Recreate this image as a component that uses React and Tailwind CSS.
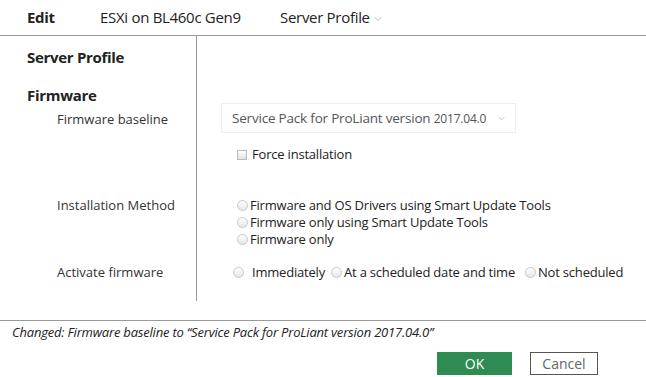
import { ChevronDown } from "lucide-react"

const font = { fontFamily: '"Open Sans", "Noto Sans", sans-serif' }

const Radio = ({ className = "" }) => (
  <span className={"inline-block w-[11px] h-[11px] rounded-full border border-[#c8c8c8] bg-gradient-to-b from-white to-[#e6e6e6] shrink-0 " + className} />
)

const Label = ({ children }) => (
  <div className="pl-[57px] text-[13px] text-[#333]">{children}</div>
)

export default function App() {
  return (
    <div className="w-[646px] h-[377px] bg-white text-[#222] overflow-hidden" style={font}>
      {/* header */}
      <div className="h-[36px] flex items-center border-b border-[#9a9a9a] text-[15px] tracking-[-0.3px]">
        <span className="pl-[27px] w-[100px] font-bold">Edit</span>
        <span className="w-[180px]">ESXi on BL460c Gen9</span>
        <span className="flex items-center">
          Server Profile
          <ChevronDown size={12} strokeWidth={1.5} className="ml-[2px] mt-[2px] text-[#aaa]" />
        </span>
      </div>

      <div className="flex h-[284px]">
        {/* left column labels */}
        <div className="w-[197px] border-r border-[#9a9a9a] h-[265px]">
          <div className="pl-[27px] pt-[10px] text-[15px] font-bold tracking-[-0.3px]">Server Profile</div>
          <div className="pl-[27px] pt-[15px] text-[15px] font-bold tracking-[-0.3px]">Firmware</div>
          <div className="pt-[4px]"><Label>Firmware baseline</Label></div>
          <div className="pt-[66px]"><Label>Installation Method</Label></div>
          <div className="pt-[48px]"><Label>Activate firmware</Label></div>
        </div>

        {/* right column controls */}
        <div className="flex-1 pl-[24px] pt-[67px] text-[13px] tracking-[-0.2px]">
          <div className="w-[295px] h-[30px] border border-[#eeeeee] flex items-center pl-[10px] pr-[8px] text-[#555]">
            <span className="flex-1 text-[13.5px]">
              Service Pack for ProLiant version <span className="text-[12px]">2017.04.0</span>
            </span>
            <ChevronDown size={11} strokeWidth={1.5} className="text-[#aaa]" />
          </div>

          <div className="flex items-center pl-[16px] pt-[13px] h-[30px]">
            <span className="inline-block w-[10px] h-[10px] border border-[#bbb] bg-gradient-to-b from-white to-[#e2e2e2] mr-[5px]" />
            Force installation
          </div>

          <div className="pl-[16px] pt-[34px] leading-[17px]">
            <div className="flex items-center"><Radio className="mr-[2px]" />Firmware and OS Drivers using Smart Update Tools</div>
            <div className="flex items-center"><Radio className="mr-[2px]" />Firmware only using Smart Update Tools</div>
            <div className="flex items-center"><Radio className="mr-[2px]" />Firmware only</div>
          </div>

          <div className="flex items-center pl-[12px] pt-[15px]">
            <Radio className="mr-[8px]" />
            <span>Immediately</span>
            <Radio className="ml-[6px] mr-[2px]" />
            <span>At a scheduled date and time</span>
            <Radio className="ml-[10px] mr-[2px]" />
            <span>Not scheduled</span>
          </div>
        </div>
      </div>

      {/* footer */}
      <div className="border-t border-[#9a9a9a]">
        <div className="pl-[12px] pt-[2px] text-[13px] italic text-[#222] tracking-[-0.2px]">
          Changed: Firmware baseline to “Service Pack for ProLiant version 2017.04.0”
        </div>
        <div className="flex justify-end pr-[48px] pt-[9px] gap-[18px]">
          <button className="w-[75px] h-[23px] bg-[#2e8b52] text-white text-[14px]">OK</button>
          <button className="w-[68px] h-[23px] border border-[#555] text-[#666] text-[14px]">Cancel</button>
        </div>
      </div>
    </div>
  )
}
